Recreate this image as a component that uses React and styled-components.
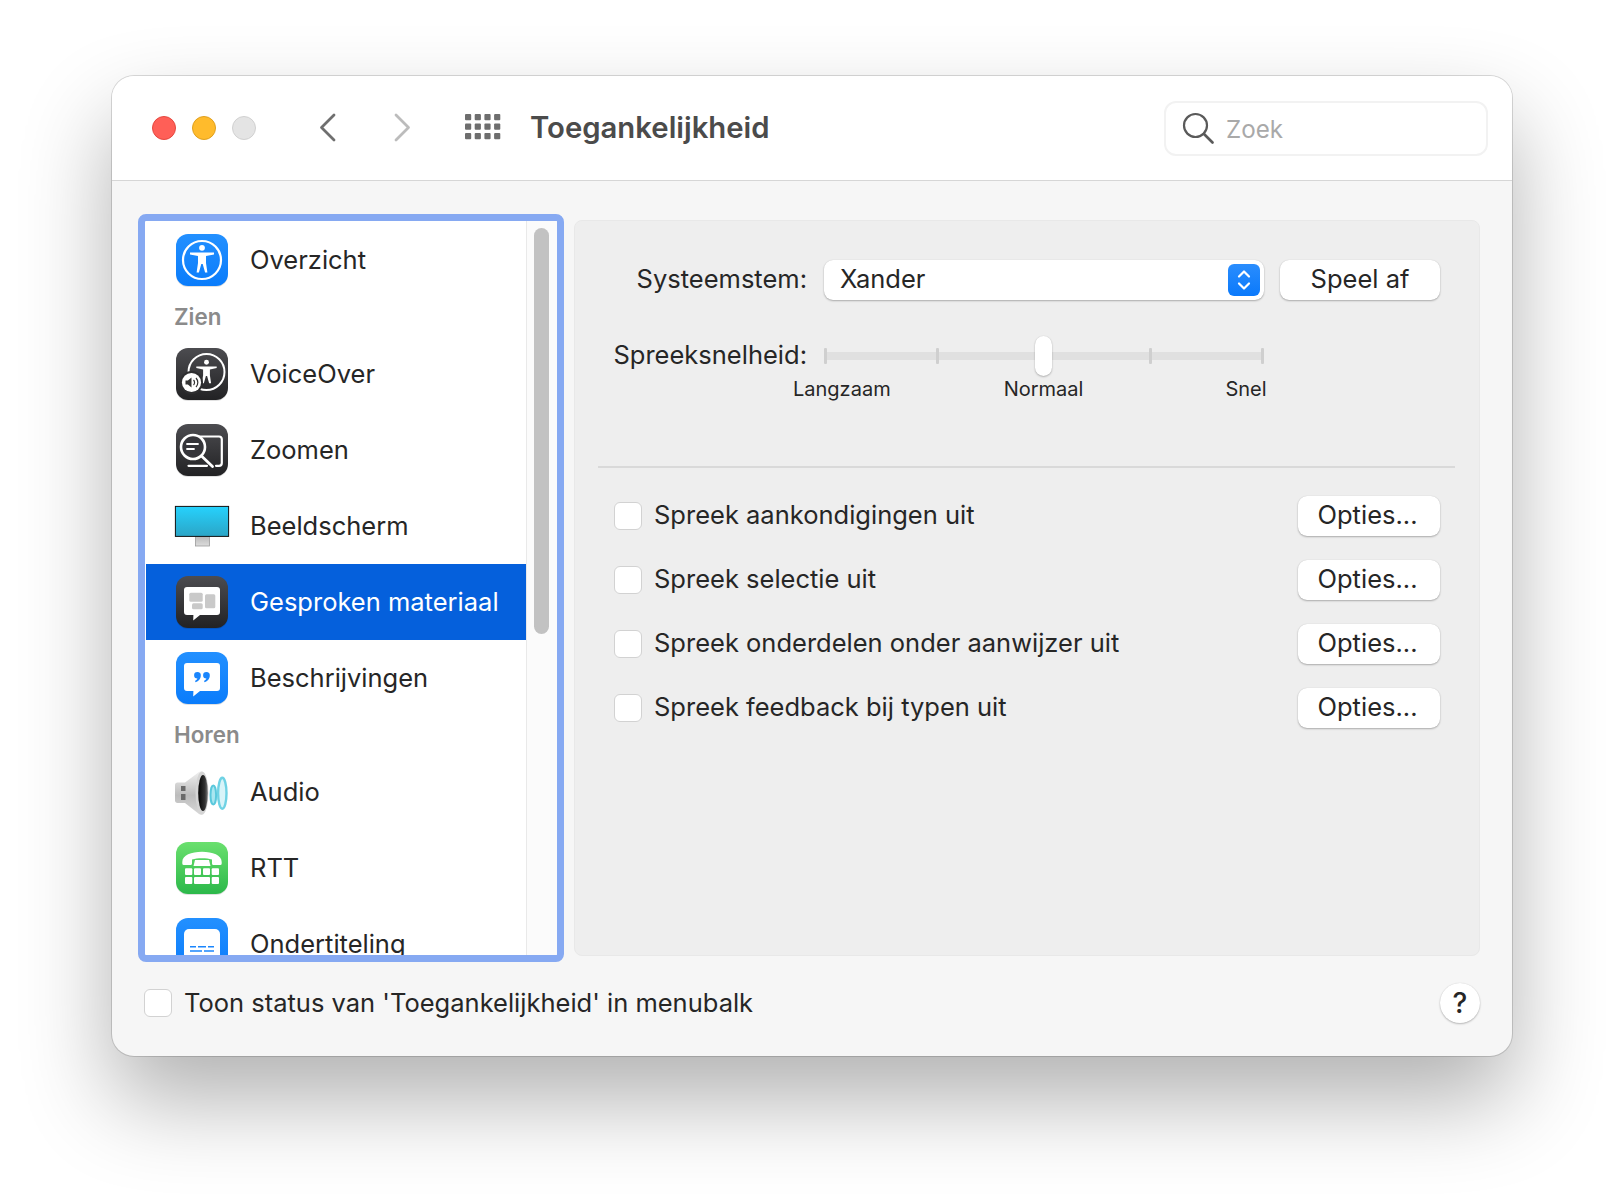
import React from 'react';
import styled, { createGlobalStyle } from 'styled-components';

const GlobalStyle = createGlobalStyle`
  html, body {
    margin: 0;
    background: #fff;
    font-family: Inter, "Noto Sans", "Liberation Sans", sans-serif;
    color: #262626;
  }
  * { box-sizing: border-box; }
`;

const Page = styled.div`
  width: 1624px;
  height: 1204px;
  padding: 76px 112px 0;
  overflow: hidden;
`;

const Window = styled.div`
  width: 1400px;
  height: 980px;
  border-radius: 22px;
  background: #f6f6f6;
  overflow: hidden;
  box-shadow: 0 0 0 1px rgba(0, 0, 0, 0.14), 0 44px 90px rgba(0, 0, 0, 0.31);
`;

const TitleBar = styled.header`
  height: 105px;
  display: flex;
  align-items: center;
  padding: 0 24px 0 40px;
  background: #fff;
  border-bottom: 1px solid #d6d6d6;
`;

const Lights = styled.div`
  display: flex;
  gap: 16px;
  margin-right: 63px;
`;

const Light = styled.span`
  width: 24px;
  height: 24px;
  border-radius: 50%;
  background: ${({ $color }) => $color};
  border: 1px solid ${({ $edge }) => $edge};
`;

const NavIcon = styled.svg`
  display: block;
  margin: 0 ${({ $gap }) => $gap}px 2px 0;
  flex: none;
`;

const Title = styled.h1`
  margin: 0 0 2px;
  font-size: 29.3px;
  font-weight: 600;
  color: #4b4b4b;
`;

const Search = styled.div`
  margin-left: auto;
  width: 324px;
  height: 55px;
  display: flex;
  align-items: center;
  gap: 12px;
  padding-left: 16px;
  border: 2px solid #f2f2f2;
  border-radius: 12px;
  color: #a9a9a9;
  font-size: 24.2px;
`;

const SearchText = styled.span`
  margin-top: 3px;
`;

const Content = styled.div`
  display: flex;
  gap: 10px;
  padding: 33px 32px 0 26px;
`;

const Sidebar = styled.div`
  width: 426px;
  height: 748px;
  flex: none;
  display: flex;
  border: 7px solid #86a9f2;
  border-radius: 8px;
  background: #fff;
  overflow: hidden;
`;

const List = styled.ul`
  width: 380px;
  height: 100%;
  margin: 0 0 0 1px;
  padding: 1px 0 0;
  list-style: none;
  overflow: hidden;
`;

const Row = styled.li`
  height: 76px;
  display: flex;
  align-items: center;
  gap: 22px;
  padding-left: 30px;
  font-size: 25.5px;
  background: ${({ $active }) => ($active ? '#0560dc' : 'transparent')};
  color: ${({ $active }) => ($active ? '#fff' : '#262626')};
`;

const RaisedText = styled.span`
  margin-bottom: ${({ $lift }) => $lift || 2}px;
`;

const GroupLabel = styled.li`
  height: 38px;
  display: flex;
  align-items: center;
  padding: 0 0 2px 28px;
  font-size: 22.4px;
  font-weight: 600;
  color: #8b8b8b;
`;

const Scroller = styled.div`
  flex: 1;
  padding: 7px 7px 0 7px;
  background: #fbfbfb;
  border-left: 1px solid #e9e9e9;
`;

const ScrollThumb = styled.div`
  width: 15px;
  height: 406px;
  border-radius: 8px;
  background: #c2c2c2;
`;

const Panel = styled.section`
  flex: 1;
  height: 736px;
  margin-top: 6px;
  padding-top: 39px;
  background: #eeeeee;
  border: 1px solid #e8e8e8;
  border-radius: 8px;
`;

const FieldGrid = styled.div`
  display: grid;
  grid-template-columns: 232px 440px 160px;
  column-gap: 17px;
  align-items: center;
`;

const FieldLabel = styled.label`
  margin-bottom: 3px;
  font-size: 25.5px;
  text-align: right;
  white-space: nowrap;
`;

const Select = styled.div`
  height: 40px;
  display: flex;
  align-items: center;
  justify-content: space-between;
  padding: 0 4px 0 16px;
  font-size: 25.5px;
  background: #fff;
  border-radius: 9px;
  box-shadow: 0 1px 2px rgba(0, 0, 0, 0.28), 0 0 1px rgba(0, 0, 0, 0.14);
`;

const Stepper = styled.span`
  width: 32px;
  height: 32px;
  display: flex;
  align-items: center;
  justify-content: center;
  border-radius: 6px;
  background: linear-gradient(#2a8dfd, #0a79fb);
`;

const Button = styled.button`
  height: 40px;
  width: ${({ $width }) => $width}px;
  margin-left: ${({ $shift }) => $shift || 0}px;
  padding: 0 ${({ $inset }) => $inset || 0}px 3px 0;
  font: inherit;
  font-size: 25.5px;
  color: #262626;
  background: #fff;
  border: 0;
  border-radius: 9px;
  box-shadow: 0 1px 2px rgba(0, 0, 0, 0.28), 0 0 1px rgba(0, 0, 0, 0.14);
`;

const SliderRow = styled(FieldGrid)`
  margin-top: 36px;
  height: 40px;
`;

const SliderTrack = styled.div`
  position: relative;
  height: 40px;
  display: flex;
  align-items: center;
  justify-content: space-between;
  &::before {
    content: '';
    position: absolute;
    left: 0;
    right: 0;
    top: 16px;
    height: 8px;
    background: #e0e0e0;
  }
`;

const Tick = styled.span`
  position: relative;
  left: ${({ $nudge }) => $nudge || 0}px;
  width: 3px;
  height: 16px;
  border-radius: 1px;
  background: #cfcfcf;
`;

const Thumb = styled.span`
  position: absolute;
  left: 211px;
  top: 0;
  width: 17px;
  height: 40px;
  border-radius: 9px;
  background: #fff;
  box-shadow: 0 1px 2px rgba(0, 0, 0, 0.25), 0 0 1px rgba(0, 0, 0, 0.15);
`;

const TickLabels = styled.div`
  display: flex;
  margin: 1px 0 0 218px;
  font-size: 20px;
  line-height: 24px;
`;

const TickLabel = styled.span`
  margin-left: ${({ $gap }) => $gap}px;
`;

const Divider = styled.hr`
  height: 2px;
  margin: 65px 24px 28px 23px;
  border: 0;
  background: #d9d9d9;
`;

const OptionList = styled.div`
  display: flex;
  flex-direction: column;
  gap: 24px;
  padding: 0 39px;
`;

const OptionRow = styled.div`
  height: 40px;
  display: flex;
  align-items: center;
  justify-content: space-between;
`;

const CheckField = styled.label`
  display: flex;
  align-items: center;
  gap: 12px;
  font-size: 25.5px;
`;

const Checkbox = styled.span`
  width: 28px;
  height: 28px;
  flex: none;
  background: #fff;
  border: 1.5px solid #d2d2d2;
  border-radius: 6px;
`;

const Footer = styled.footer`
  display: flex;
  align-items: center;
  justify-content: space-between;
  margin-top: 21px;
  padding: 0 32px;
`;

const HelpButton = styled.button`
  width: 40px;
  height: 40px;
  padding: 0;
  border: 0;
  border-radius: 50%;
  font: inherit;
  font-size: 28px;
  font-weight: 500;
  color: #262626;
  background: #fff;
  box-shadow: 0 1px 2px rgba(0, 0, 0, 0.25), 0 0 1px rgba(0, 0, 0, 0.14);
`;

const IconSvg = styled.svg`
  flex: none;
  overflow: visible;
`;

const AppIcon = ({ id, from, to, children }) => (
  <IconSvg width="52" height="52" viewBox="0 0 52 52">
    <defs>
      <linearGradient id={id} x1="0" y1="0" x2="0" y2="1">
        <stop offset="0" stopColor={from} />
        <stop offset="1" stopColor={to} />
      </linearGradient>
    </defs>
    <rect x="0" y="1" width="52" height="52" rx="12" fill="#000" opacity="0.12" />
    <rect width="52" height="52" rx="12" fill={`url(#${id})`} />
    {children}
  </IconSvg>
);

const Figure = ({ fill = '#fff' }) => (
  <g fill={fill}>
    <circle cx="26" cy="13.8" r="2.9" />
    <path d="M14 18.6h24v1.9l-8 1.6v7l1.4 9.4h-2.3l-2.4-8.6h-1.4l-2.4 8.6h-2.3l1.4-9.4v-7l-8-1.6z" />
  </g>
);

const BLUE = ['#2390ff', '#0a7cfb'];
const DARK = ['#4c4c50', '#222224'];

const OverviewIcon = () => (
  <AppIcon id="ov" from={BLUE[0]} to={BLUE[1]}>
    <circle cx="26" cy="26" r="19" fill="none" stroke="#fff" strokeWidth="2.2" />
    <Figure />
  </AppIcon>
);

const VoiceOverIcon = () => (
  <AppIcon id="vo" from={DARK[0]} to={DARK[1]}>
    <circle cx="30.5" cy="24" r="18" fill="none" stroke="#fff" strokeWidth="2" />
    <g transform="translate(8.4 2.6) scale(0.85)">
      <Figure />
    </g>
    <circle cx="15.5" cy="34.5" r="11.5" fill="#2e2e30" />
    <circle cx="15.5" cy="34.5" r="9.6" fill="#fff" />
    <path d="M9.5 32.5h2.4l3.6-3v10l-3.6-3H9.5z" fill="#333" />
    <path d="M17.5 32a3.5 3.5 0 0 1 0 5M20 30a6.5 6.5 0 0 1 0 9" fill="none" stroke="#333" strokeWidth="1.2" />
  </AppIcon>
);

const ZoomIcon = () => (
  <AppIcon id="zo" from={DARK[0]} to={DARK[1]}>
    <path d="M17 12.5h26a2.8 2.8 0 0 1 2.8 2.8V39a2.8 2.8 0 0 1-2.8 2.8h-3M31 41.8H12.5" fill="none" stroke="#fff" strokeWidth="2.2" strokeLinecap="round" />
    <circle cx="17" cy="23" r="12" fill="#35353a" stroke="#fff" strokeWidth="2.6" />
    <path d="M11 20h11M11 25h7" stroke="#fff" strokeWidth="1.8" strokeLinecap="round" />
    <path d="M25.5 32l11 10.5" stroke="#fff" strokeWidth="2.8" strokeLinecap="round" />
  </AppIcon>
);

const DisplayIcon = () => (
  <IconSvg width="52" height="52" viewBox="0 0 52 52">
    <defs>
      <linearGradient id="di" x1="0" y1="0" x2="0" y2="1">
        <stop offset="0" stopColor="#26d2fd" />
        <stop offset="1" stopColor="#2ba5c6" />
      </linearGradient>
      <linearGradient id="ds" x1="0" y1="0" x2="0" y2="1">
        <stop offset="0" stopColor="#b8b8b8" />
        <stop offset="1" stopColor="#dcdcdc" />
      </linearGradient>
    </defs>
    <rect x="19.5" y="36" width="14" height="10" fill="url(#ds)" stroke="#9b9b9b" strokeWidth="0.8" />
    <rect x="-0.6" y="6.4" width="53.2" height="30" fill="url(#di)" stroke="#111" strokeWidth="1" />
  </IconSvg>
);

const Bubble = ({ fill = '#fff' }) => (
  <path
    d="M11 11h30a3 3 0 0 1 3 3v22a3 3 0 0 1-3 3H24l-6.8 5.6.2-5.6H11a3 3 0 0 1-3-3V14a3 3 0 0 1 3-3z"
    fill={fill}
  />
);

const SpeechIcon = () => (
  <AppIcon id="sp" from={DARK[0]} to={DARK[1]}>
    <Bubble />
    <rect x="13.3" y="16.7" width="13.4" height="9" rx="1.5" fill="#c9c9c9" />
    <rect x="16" y="27.3" width="10.7" height="6" rx="1.5" fill="#c9c9c9" />
    <rect x="29" y="18.3" width="10.3" height="14" rx="1.5" fill="#c9c9c9" />
  </AppIcon>
);

const QuoteMark = ({ x }) => (
  <path
    transform={`translate(${x} 20)`}
    d="M3.4 0a3.4 3.4 0 0 1 3.4 3.6C6.8 7 4.6 9.4 1.6 10.2L1 9c1.4-.8 2.2-1.6 2.4-2.4A3.3 3.3 0 0 1 3.4 0z"
    fill="#1a86fd"
  />
);

const CaptionIcon = () => (
  <AppIcon id="ca" from={BLUE[0]} to={BLUE[1]}>
    <Bubble />
    <QuoteMark x={18} />
    <QuoteMark x={27} />
  </AppIcon>
);

const AudioIcon = () => (
  <IconSvg width="52" height="52" viewBox="0 0 52 52">
    <defs>
      <linearGradient id="au" x1="0" y1="0" x2="0" y2="1">
        <stop offset="0" stopColor="#f0f0f0" />
        <stop offset="0.55" stopColor="#bcbcbc" />
        <stop offset="1" stopColor="#d8d8d8" />
      </linearGradient>
      <linearGradient id="ac" x1="0" y1="0" x2="1" y2="0">
        <stop offset="0" stopColor="#050505" />
        <stop offset="0.7" stopColor="#333" />
        <stop offset="1" stopColor="#777" />
      </linearGradient>
    </defs>
    <path d="M-1 19c0-1.5 1-2.5 2.500-2.500H9L23 6c1.500-1 3-1 4 0v42c-1 1-2.500 1-4 0L9 37H1.500C0 37-1 36-1 34.500z" fill="url(#au)" />
    <path d="M5 20h4.500v5H5zM5 28h4.500v6H5z" fill="#6a6a6a" />
    <ellipse cx="26" cy="27" rx="6.500" ry="21.500" fill="#d4d4d4" />
    <ellipse cx="27" cy="27" rx="4.800" ry="18" fill="url(#ac)" />
    <ellipse cx="37.300" cy="29" rx="2.800" ry="9.500" fill="#a9e6f0" stroke="#5ac8dc" strokeWidth="2" />
    <ellipse cx="46.300" cy="27.300" rx="4.200" ry="15.500" fill="#d8f4f9" stroke="#6fd2e4" strokeWidth="2.400" />
  </IconSvg>
);

const RttIcon = () => (
  <AppIcon id="rt" from="#6ae06e" to="#2cb84a">
    <path
      d="M6.300 20c0-7 9-10.300 19.700-10.300S45.700 13 45.700 20v1.500a1.500 1.500 0 0 1-1.500 1.500h-6.700a1.500 1.500 0 0 1-1.500-1.500V17.500c-3-1-6-1.300-10-1.300s-7 .3-10 1.300v4a1.500 1.500 0 0 1-1.500 1.500H7.800a1.500 1.500 0 0 1-1.500-1.500zM19 18h14l1.500 6h-17z"
      fill="#fff"
    />
    <g fill="#fff">
      <rect x="9" y="26.3" width="7.3" height="6.8" rx="1" />
      <rect x="18" y="26.3" width="7" height="6.8" rx="1" />
      <rect x="27" y="26.3" width="7" height="6.8" rx="1" />
      <rect x="35.7" y="26.3" width="7.3" height="6.8" rx="1" />
      <rect x="9" y="35" width="7.3" height="7" rx="1" />
      <rect x="18" y="35" width="16" height="7" rx="1" />
      <rect x="35.7" y="35" width="7.3" height="7" rx="1" />
    </g>
  </AppIcon>
);

const SubtitleIcon = () => (
  <AppIcon id="su" from={BLUE[0]} to={BLUE[1]}>
    <rect x="8" y="11" width="36" height="34" rx="5" fill="#fff" />
    <path d="M14 28.7h6M22 28.7h8M32 28.7h6M14 33h12M28 33h10" stroke="#1a86fd" strokeWidth="1.6" />
  </AppIcon>
);

const sidebarRows = [
  { label: 'Overzicht', Icon: OverviewIcon },
  { group: 'Zien' },
  { label: 'VoiceOver', Icon: VoiceOverIcon },
  { label: 'Zoomen', Icon: ZoomIcon },
  { label: 'Beeldscherm', Icon: DisplayIcon },
  { label: 'Gesproken materiaal', Icon: SpeechIcon, active: true },
  { label: 'Beschrijvingen', Icon: CaptionIcon },
  { group: 'Horen' },
  { label: 'Audio', Icon: AudioIcon },
  { label: 'RTT', Icon: RttIcon },
  { label: 'Ondertiteling', Icon: SubtitleIcon },
];

const options = [
  'Spreek aankondigingen uit',
  'Spreek selectie uit',
  'Spreek onderdelen onder aanwijzer uit',
  'Spreek feedback bij typen uit',
];

const App = () => {
  return (
    <Page>
      <GlobalStyle />
      <Window>
        <TitleBar>
          <Lights>
            <Light $color="#ff5f57" $edge="#e5483f" />
            <Light $color="#ffbb2c" $edge="#e0a01e" />
            <Light $color="#e4e4e4" $edge="#d0d0d0" />
          </Lights>
          <NavIcon width="17" height="29" viewBox="0 0 17 29" $gap={58}>
            <path d="M15 2 2.5 14.5 15 27" fill="none" stroke="#6f6f6f" strokeWidth="2.8" strokeLinecap="round" strokeLinejoin="round" />
          </NavIcon>
          <NavIcon width="17" height="29" viewBox="0 0 17 29" $gap={54}>
            <path d="M2 2l12.5 12.5L2 27" fill="none" stroke="#bcbcbc" strokeWidth="2.8" strokeLinecap="round" strokeLinejoin="round" />
          </NavIcon>
          <NavIcon width="36" height="26" viewBox="0 0 36 26" $gap={29}>
            <g fill="#6e6e6e">
              {[0, 9.5, 19].map((y) =>
                [0, 9.7, 19.4, 29.1].map((x) => (
                  <rect key={`${x}-${y}`} x={x} y={y} width="6.2" height="6.2" rx="1" />
                ))
              )}
            </g>
          </NavIcon>
          <Title>Toegankelijkheid</Title>
          <Search>
            <svg width="32" height="32" viewBox="0 0 32 32">
              <circle cx="13.5" cy="13.5" r="11.5" fill="none" stroke="#5a5a5a" strokeWidth="2.2" />
              <path d="M22 22l8.500 8.500" stroke="#5a5a5a" strokeWidth="2.6" strokeLinecap="round" />
            </svg>
            <SearchText>Zoek</SearchText>
          </Search>
        </TitleBar>
        <Content>
          <Sidebar>
            <List>
              {sidebarRows.map((row) =>
                row.group ? (
                  <GroupLabel key={row.group}>{row.group}</GroupLabel>
                ) : (
                  <Row key={row.label} $active={row.active}>
                    <row.Icon />
                    <RaisedText>{row.label}</RaisedText>
                  </Row>
                )
              )}
            </List>
            <Scroller>
              <ScrollThumb />
            </Scroller>
          </Sidebar>
          <Panel>
            <FieldGrid>
              <FieldLabel>Systeemstem:</FieldLabel>
              <Select>
                <RaisedText $lift={4}>Xander</RaisedText>
                <Stepper>
                  <svg width="16" height="24" viewBox="0 0 16 24">
                    <path d="M3 8.5 8 3.5l5 5M3 15.5l5 5 5-5" fill="none" stroke="#fff" strokeWidth="2.2" strokeLinecap="round" strokeLinejoin="round" />
                  </svg>
                </Stepper>
              </Select>
              <Button $width={160} $shift={-1}>Speel af</Button>
            </FieldGrid>
            <SliderRow>
              <FieldLabel>Spreeksnelheid:</FieldLabel>
              <SliderTrack>
                <Tick />
                <Tick $nudge={3} />
                <Tick />
                <Tick $nudge={-3} />
                <Tick />
                <Thumb />
              </SliderTrack>
            </SliderRow>
            <TickLabels>
              <TickLabel $gap={0}>Langzaam</TickLabel>
              <TickLabel $gap={113}>Normaal</TickLabel>
              <TickLabel $gap={142}>Snel</TickLabel>
            </TickLabels>
            <Divider />
            <OptionList>
              {options.map((option) => (
                <OptionRow key={option}>
                  <CheckField>
                    <Checkbox />
                    <RaisedText $lift={3}>{option}</RaisedText>
                  </CheckField>
                  <Button $width={142} $inset={3}>Opties...</Button>
                </OptionRow>
              ))}
            </OptionList>
          </Panel>
        </Content>
        <Footer>
          <CheckField>
            <Checkbox />
            <RaisedText>Toon status van 'Toegankelijkheid' in menubalk</RaisedText>
          </CheckField>
          <HelpButton>?</HelpButton>
        </Footer>
      </Window>
    </Page>
  );
};

export default App;
